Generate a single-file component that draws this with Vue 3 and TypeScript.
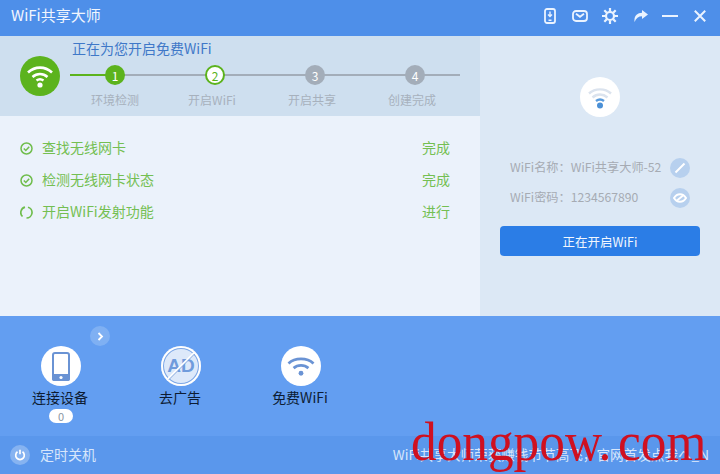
<script setup lang="ts">
const steps = [
  { n: 1, label: '环境检测', state: 'done' },
  { n: 2, label: '开启WiFi', state: 'active' },
  { n: 3, label: '开启共享', state: 'todo' },
  { n: 4, label: '创建完成', state: 'todo' },
]
const tasks = [
  { name: '查找无线网卡', state: '完成', busy: false },
  { name: '检测无线网卡状态', state: '完成', busy: false },
  { name: '开启WiFi发射功能', state: '进行', busy: true },
]
</script>

<template>
  <div class="app">
    <header class="titlebar">
      <span class="title">WiFi共享大师</span>
      <div class="win-icons">
        <svg width="12" height="16" viewBox="0 0 12 16"><rect x="1" y="1" width="10" height="14" rx="2" fill="none" stroke="#eaf3ff" stroke-width="1.800"/><path d="M6 3.500v5M4 6.500 6 8.500 8 6.500M4.500 12.200h3" fill="none" stroke="#eaf3ff" stroke-width="1.400"/></svg>
        <svg width="16" height="12" viewBox="0 0 16 12"><rect x="1" y="1" width="14" height="10" rx="3" fill="none" stroke="#eaf3ff" stroke-width="1.800"/><path d="M4 3.800 8 6.800 12 3.800" fill="none" stroke="#eaf3ff" stroke-width="1.800"/></svg>
        <svg width="16" height="16" viewBox="0 0 16 16"><circle cx="8" cy="8" r="4" fill="none" stroke="#eaf3ff" stroke-width="2.200"/><path d="M8 0v3.500M8 12.500V16M0 8h3.500M12.500 8H16M2.300 2.300 4.800 4.800M11.200 11.200l2.500 2.500M13.700 2.300 11.200 4.800M4.800 11.200l-2.500 2.500" stroke="#eaf3ff" stroke-width="2.200"/></svg>
        <svg width="14" height="12" viewBox="0 0 14 12"><path d="M8 0l6 4.500L8 9V6.200C4.500 6.200 2 8 .6 12-.4 6.500 3 3 8 2.800z" fill="#eaf3ff"/></svg>
        <svg width="16" height="2" viewBox="0 0 16 2"><rect width="16" height="2" fill="#eaf3ff"/></svg>
        <svg width="12" height="12" viewBox="0 0 12 12"><path d="M.8.800l10.400 10.400M11.200.800.800 11.200" stroke="#eaf3ff" stroke-width="2"/></svg>
      </div>
    </header>

    <main class="middle">
      <section class="left">
        <div class="progress">
          <div class="badge">
            <svg width="28" height="24" viewBox="0 0 28 24"><g fill="none" stroke="#fff" stroke-width="2.600"><path d="M2 8.500C9 2 19 2 26 8.500"/><path d="M6.500 13c4.500-4 10.500-4 15 0"/></g><path d="M10.500 16.500c2-1.500 5-1.500 7 0" fill="none" stroke="#fff" stroke-width="2.400"/><circle cx="14" cy="21" r="2.600" fill="#fff"/></svg>
          </div>
          <div class="progress-body">
            <div class="heading">正在为您开启免费WiFi</div>
            <div class="rail">
              <div v-for="s in steps" :key="s.n" class="step">
                <span class="dot" :class="s.state">{{ s.n }}</span>
                <span class="step-label">{{ s.label }}</span>
              </div>
            </div>
          </div>
        </div>
        <ul class="tasks">
          <li v-for="t in tasks" :key="t.name" class="task">
            <svg v-if="!t.busy" width="13" height="13" viewBox="0 0 13 13"><circle cx="6.500" cy="6.500" r="5.500" fill="none" stroke="#6fbd4c" stroke-width="1.500"/><path d="M3.800 6.500 5.800 8.500 9.200 4.800" fill="none" stroke="#6fbd4c" stroke-width="1.500"/></svg>
            <svg v-else width="13" height="13" viewBox="0 0 13 13"><path d="M5 1.200A5.500 5.500 0 0 0 2.500 10.500M8 1.200A5.500 5.500 0 0 1 6.500 12" fill="none" stroke="#6fbd4c" stroke-width="1.700"/></svg>
            <span class="task-name">{{ t.name }}</span>
            <span class="task-state">{{ t.state }}</span>
          </li>
        </ul>
      </section>

      <aside class="right">
        <div class="wifi-disc">
          <svg width="26" height="24" viewBox="0 0 26 24"><g fill="none" stroke-width="2.400"><path d="M2 8.500C8 3 18 3 24 8.500" stroke="#dbe3ee"/><path d="M5.500 12.500c4.500-4 10.500-4 15 0" stroke="#dbe3ee"/><path d="M9 16c2.500-2 5.500-2 8 0" stroke="#5a9bdc"/></g><circle cx="13" cy="20.500" r="3" fill="#4b90d6"/></svg>
        </div>
        <div class="info-row first">
          <span>WiFi名称：WiFi共享大师-52</span>
          <span class="info-btn">
            <svg width="12" height="12" viewBox="0 0 12 12"><path d="M1.500 10.500 10.500 1.500" stroke="#fff" stroke-width="2"/></svg>
          </span>
        </div>
        <div class="info-row">
          <span>WiFi密码：1234567890</span>
          <span class="info-btn">
            <svg width="14" height="10" viewBox="0 0 14 10"><path d="M1 5c3-5 9-5 12 0-3 5-9 5-12 0z" fill="none" stroke="#fff" stroke-width="2"/><path d="M4 7.500 10 2.500" stroke="#fff" stroke-width="1.800"/></svg>
          </span>
        </div>
        <button class="start">正在开启WiFi</button>
      </aside>
    </main>

    <section class="tools">
      <div class="tool tool-devices">
        <span class="disc">
          <svg width="18" height="29" viewBox="0 0 18 29"><rect x="1" y="1" width="16" height="27" rx="2" fill="none" stroke="#6a93d4" stroke-width="2"/><rect x="0" y="22" width="18" height="7" rx="2" fill="#6a93d4"/><circle cx="9" cy="25.500" r="1.600" fill="#fff"/></svg>
        </span>
        <span class="tool-name">连接设备</span>
        <span class="count">0</span>
      </div>
      <div class="tool">
        <span class="disc ad">
          <span class="ad-text">AD</span>
          <svg class="ad-slash" width="40" height="40" viewBox="0 0 40 40"><path d="M7 33 33 7" stroke="#fff" stroke-width="2"/><path d="M8 33.500 33.500 8" stroke="#6a93d4" stroke-width=".8"/></svg>
        </span>
        <span class="tool-name">去广告</span>
      </div>
      <div class="tool">
        <span class="disc">
          <svg width="28" height="19" viewBox="0 0 30 20.500"><g fill="none" stroke="#6a93d4" stroke-width="3"><path d="M1.500 7c7-6.500 20-6.500 27 0"/><path d="M7 12c4.500-4 11.500-4 16 0"/></g><circle cx="15" cy="17.500" r="2.600" fill="#6a93d4"/></svg>
        </span>
        <span class="tool-name">免费WiFi</span>
      </div>
      <span class="more">
        <svg width="7" height="9" viewBox="0 0 7 9"><path d="M1.500 1 5 4.500 1.500 8" fill="none" stroke="#fff" stroke-width="1.800"/></svg>
      </span>
    </section>

    <footer class="statusbar">
      <span class="power">
        <svg width="12" height="12" viewBox="0 0 12 12"><path d="M3.500 2.800a4.300 4.300 0 1 0 5 0M6 .8v4.400" fill="none" stroke="#fff" stroke-width="1.700"/></svg>
      </span>
      <span class="timer">定时关机</span>
      <span class="notice">WiFi共享大师荣获赚钱节节高飞，官网首发点我ヘ_N</span>
    </footer>

    <div class="watermark">dongpow.<span class="wm-gap">com</span></div>
  </div>
</template>

<style>
html, body {
  margin: 0;
  overflow: hidden;
}
</style>

<style scoped>
.app {
  position: relative;
  width: 720px;
  height: 474px;
  display: flex;
  flex-direction: column;
  overflow: hidden;
  font-family: "Noto Sans CJK SC", "Open Sans", sans-serif;
  font-size: 14px;
}

.titlebar {
  height: 36px;
  flex: none;
  display: flex;
  align-items: center;
  justify-content: space-between;
  padding: 0 14px 4px 11px;
  box-sizing: border-box;
  background: #4e8fe9;
}

.title {
  color: #f1f6fe;
  font-size: 15px;
  line-height: 20px;
  margin-bottom: 2px;
}

.win-icons {
  display: flex;
  align-items: center;
  gap: 14px;
}

.win-icons svg:nth-child(even) {
  margin-left: 2px;
}

.middle {
  height: 280px;
  flex: none;
  display: flex;
}

.left {
  width: 480px;
  display: flex;
  flex-direction: column;
}

.progress {
  height: 80px;
  display: flex;
  background: #cedfef;
  padding-left: 20px;
  box-sizing: border-box;
}

.badge {
  width: 40px;
  height: 40px;
  margin-top: 20px;
  border-radius: 50%;
  background: #5cb31d;
  display: flex;
  align-items: center;
  justify-content: center;
  flex: none;
}

.progress-body {
  margin-left: 10px;
}

.heading {
  color: #3f78c8;
  font-size: 14px;
  line-height: 20px;
  margin: 2px 0 0 2px;
}

.rail {
  width: 390px;
  margin-top: 7px;
  display: flex;
  justify-content: space-between;
  background:
    linear-gradient(#5cb31d, #5cb31d) 0 9px / 36px 2px no-repeat,
    linear-gradient(#a3adb9, #a3adb9) 0 9px / 100% 2px no-repeat;
}

.step {
  flex: 0 0 100px;
  margin-left: -5px;
  margin-right: -5px;
  display: flex;
  flex-direction: column;
  align-items: center;
}

.dot {
  width: 20px;
  height: 20px;
  box-sizing: border-box;
  border-radius: 50%;
  display: flex;
  align-items: center;
  justify-content: center;
  font-size: 12px;
  color: #fff;
  background: #a3adb9;
}

.dot.done {
  background: #5cb31d;
}

.dot.active {
  background: #fff;
  border: 2px solid #5cb31d;
  color: #5cb31d;
}

.step-label {
  margin-top: 7px;
  color: #a7b1bd;
  font-size: 12px;
  line-height: 16px;
}

.step + .step .step-label {
  margin-left: -6px;
}

.tasks {
  flex: 1;
  margin: 0;
  padding: 16px 30px 0 20px;
  list-style: none;
  background: #ebf2fb;
}

.task {
  height: 32px;
  display: flex;
  align-items: center;
  color: #74bf52;
}

.task-name {
  margin-left: 9px;
  flex: 1;
}

.task-name,
.task-state {
  line-height: 20px;
  margin-bottom: 3px;
}

.right {
  flex: 1;
  background: #dce8f5;
  display: flex;
  flex-direction: column;
  align-items: center;
  padding: 0 20px;
}

.wifi-disc {
  width: 40px;
  height: 40px;
  margin-top: 41px;
  border-radius: 50%;
  background: #fff;
  display: flex;
  align-items: center;
  justify-content: center;
}

.info-row {
  width: 180px;
  height: 30px;
  display: flex;
  align-items: center;
  justify-content: space-between;
  color: #a6abb3;
  font-size: 12.200px;
}

.info-row.first {
  margin-top: 36px;
}

.info-row span:first-child {
  margin-bottom: 2px;
}

.info-btn {
  width: 20px;
  height: 20px;
  border-radius: 50%;
  background: #b7d0ee;
  display: flex;
  align-items: center;
  justify-content: center;
}

.start {
  width: 200px;
  height: 30px;
  margin-top: 13px;
  border: 0;
  border-radius: 4px;
  background: #2b7de6;
  color: #f2f7fe;
  font: inherit;
  font-size: 12.500px;
  padding: 0;
}

.tools {
  position: relative;
  height: 120px;
  flex: none;
  display: flex;
  gap: 60px;
  padding: 30px 0 0 31px;
  box-sizing: border-box;
  background: #639ef1;
}

.tool {
  width: 60px;
  display: flex;
  flex-direction: column;
  align-items: center;
}

.disc {
  position: relative;
  width: 40px;
  height: 40px;
  border-radius: 50%;
  background: #fff;
  display: flex;
  align-items: center;
  justify-content: center;
}

.disc.ad {
  background: #dde9fa;
  box-shadow: inset 0 0 0 2px #fff, inset 0 0 0 3px #7ba6e6;
}

.ad-text {
  color: #6f9bdc;
  font-family: "Liberation Sans", sans-serif;
  font-size: 19px;
  font-weight: 700;
}

.ad-slash {
  position: absolute;
  left: 0;
  top: 0;
}

.tool-name {
  margin: 1px 0 0 -2px;
  color: #0d1c33;
  font-size: 14px;
  line-height: 20px;
  white-space: nowrap;
}

.count {
  width: 24px;
  height: 14px;
  margin-top: 2px;
  border-radius: 7px;
  background: #fff;
  color: #8c96a3;
  font-size: 11px;
  line-height: 14px;
  text-align: center;
}

.more {
  position: absolute;
  left: 90px;
  top: 10px;
  width: 20px;
  height: 20px;
  border-radius: 50%;
  background: #7fb0f3;
  display: flex;
  align-items: center;
  justify-content: center;
}

.statusbar {
  flex: 1;
  display: flex;
  align-items: center;
  padding: 0 11px 0 10px;
  background: #5a97ec;
  color: #d7e6fb;
}

.power {
  width: 20px;
  height: 20px;
  border-radius: 50%;
  background: #86b3f1;
  display: flex;
  align-items: center;
  justify-content: center;
}

.timer {
  margin-left: 10px;
  margin-bottom: 2px;
  flex: 1;
}

.notice {
  white-space: nowrap;
  font-size: 13.600px;
  margin-bottom: 2px;
}

.watermark {
  position: absolute;
  left: 411px;
  top: 412px;
  color: #cf1020;
  font-family: "Liberation Serif", serif;
  font-size: 54px;
  line-height: 60px;
  white-space: nowrap;
  transform: scaleX(0.95);
  transform-origin: left center;
}

.wm-gap {
  margin-left: 7px;
}
</style>
